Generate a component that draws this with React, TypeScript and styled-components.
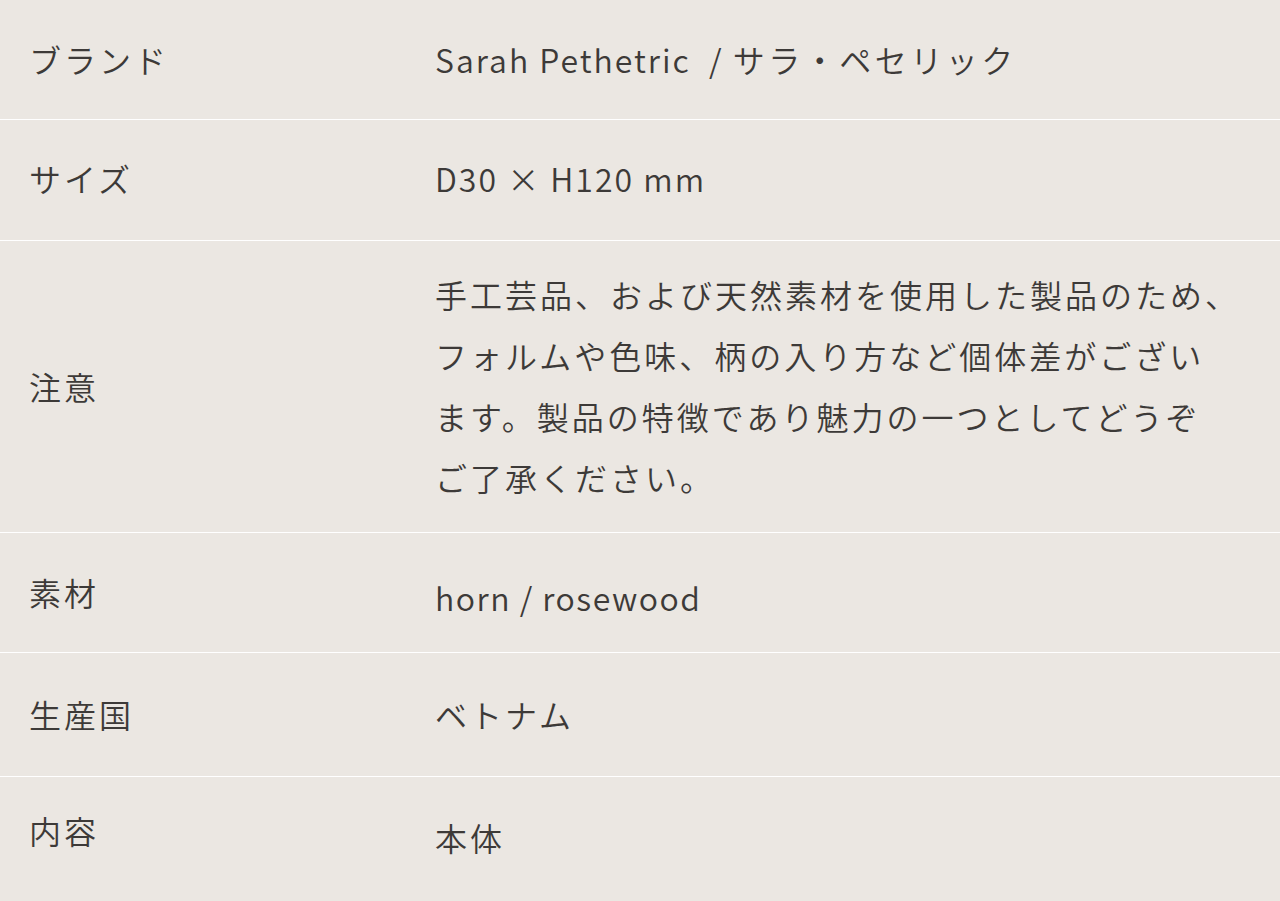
import styled, { createGlobalStyle } from 'styled-components';

const GlobalStyle = createGlobalStyle`
	html, body {
		margin: 0;
		padding: 0;
		background: #ebe7e2;
	}
	body {
		font-family: 'Noto Sans CJK JP', 'Noto Sans', sans-serif;
		font-weight: 350;
		color: #3d3a38;
	}
`;

const Table = styled.dl`
	margin: 0;
	width: 1280px;
	background: #ebe7e2;
`;

const Row = styled.div<{ top?: number; bottom?: number }>`
	display: grid;
	grid-template-columns: 400px 1fr;
	align-items: center;
	padding: ${(p) => p.top ?? 29}px 0 ${(p) => p.bottom ?? 29}px;
	border-bottom: 1px solid #ffffff;
	&:last-child {
		border-bottom: none;
	}
`;

const Label = styled.dt`
	margin: 0;
	padding-left: 29px;
	font-size: 32px;
	line-height: 61px;
	letter-spacing: 3px;
`;

const Value = styled.dd<{ drop?: number; spacing?: number }>`
	margin: 0;
	padding: ${(p) => p.drop ?? 0}px 40px 0 35px;
	font-size: 32px;
	line-height: 61px;
	letter-spacing: ${(p) => p.spacing ?? 2}px;
`;

const Kana = styled.span`
	letter-spacing: 3.5px;
`;

const notice = [
	'手工芸品、および天然素材を使用した製品のため、',
	'フォルムや色味、柄の入り方など個体差がござい',
	'ます。製品の特徴であり魅力の一つとしてどうぞ',
	'ご了承ください。',
];

const rows = [
	{
		label: 'ブランド',
		value: (
			<>
				Sarah Pethetric{'\u00a0 '}/ <Kana>サラ・ペセリック</Kana>
			</>
		),
	},
	{ label: 'サイズ', value: 'D30 × H120 mm', top: 28, bottom: 31 },
	{
		label: '注意',
		value: notice.map((line, i) => (
			<span key={i}>
				{line}
				{i < notice.length - 1 && <br />}
			</span>
		)),
		top: 23,
		bottom: 24,
		spacing: 3,
	},
	{ label: '素材', value: 'horn / rosewood', top: 24, bottom: 24, drop: 10, spacing: 1.5 },
	{ label: '生産国', value: 'ベトナム', top: 31, bottom: 31, spacing: 3 },
	{ label: '内容', value: '本体', top: 16, bottom: 31, drop: 14, spacing: 3 },
];

export default function App() {
	return (
		<>
			<GlobalStyle />
			<Table>
				{rows.map((r) => (
					<Row key={r.label} top={r.top} bottom={r.bottom}>
						<Label>{r.label}</Label>
						<Value drop={r.drop} spacing={r.spacing}>
							{r.value}
						</Value>
					</Row>
				))}
			</Table>
		</>
	);
}
